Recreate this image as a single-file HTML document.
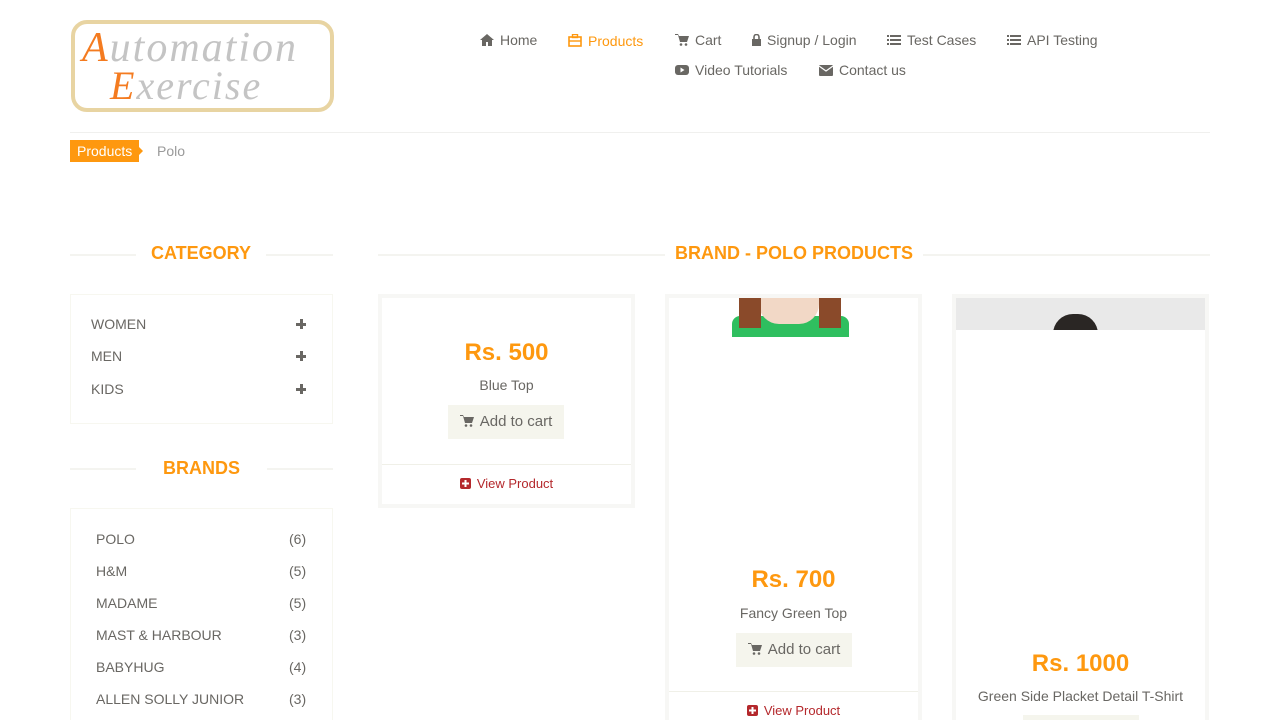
<!DOCTYPE html>
<html style="width:1280px;height:720px;overflow:hidden"><head><style>
*{margin:0;padding:0;box-sizing:border-box}
body{width:1280px;height:720px;overflow:hidden;background:#fff;font-family:"Liberation Sans",sans-serif;color:#696763;position:relative}
.a{position:absolute;white-space:nowrap}
.nav{font-size:14px;color:#696763}
.or{color:#FE980F}
.ttl{font-size:18px;font-weight:bold;color:#FE980F}
.line{position:absolute;height:2px;background:#f4f4f0}
.box{position:absolute;border:1px solid #f7f7f0}
.cat{font-size:14px;color:#696763}
.card{position:absolute;border:4px solid #f7f7f5;background:#fff}
.price{font-size:24px;font-weight:bold;color:#FE980F;text-align:center;width:100%}
.btn{position:absolute;background:#F5F5ED;color:#696763;font-size:15px;height:34px;line-height:34px;width:116px;text-align:center}
.vp{font-size:13px;color:#B4282C;text-align:center;width:100%}
.ic{display:inline-block;vertical-align:-1px;margin-right:6px}
.pl{position:absolute;width:10px;height:10px}
.pl:before{content:"";position:absolute;left:3.5px;top:0;width:3px;height:10px;background:#696763}
.pl:after{content:"";position:absolute;left:0;top:3.5px;width:10px;height:3px;background:#696763}
</style></head><body>
<!-- logo -->
<div class="a" style="left:71px;top:20px;width:263px;height:92px;border:4px solid #e8d4a2;border-radius:16px;background:#fff"></div>
<div class="a" style="left:82px;top:24px;font-family:'Liberation Serif',serif;font-style:italic;font-size:42px;color:#c4c4c4;letter-spacing:2px"><span style="color:#f47b20">A</span>utomation</div>
<div class="a" style="left:110px;top:62px;font-family:'Liberation Serif',serif;font-style:italic;font-size:40px;color:#c4c4c4;letter-spacing:2px"><span style="color:#f47b20">E</span>xercise</div>
<!-- nav -->
<div class="a nav" style="left:480px;top:32px"><svg class="ic" width="14" height="12" viewBox="0 0 14 12"><path d="M7 0L0 6h2v6h4V8h2v4h4V6h2z" fill="#696763"/></svg>Home</div>
<div class="a nav or" style="left:568px;top:33px"><svg class="ic" width="14" height="13" viewBox="0 0 14 13"><rect x="1" y="3" width="12" height="9" fill="none" stroke="#FE980F" stroke-width="1.6"/><rect x="4.5" y="0.5" width="5" height="3" fill="none" stroke="#FE980F" stroke-width="1.4"/><line x1="1" y1="7" x2="13" y2="7" stroke="#FE980F" stroke-width="1.4"/></svg>Products</div>
<div class="a nav" style="left:675px;top:32px"><svg class="ic" width="14" height="12" viewBox="0 0 14 12"><path d="M0 0h3l1 2h10l-2 6H5L3 1H0z" fill="#696763"/><circle cx="6" cy="10.5" r="1.3" fill="#696763"/><circle cx="11" cy="10.5" r="1.3" fill="#696763"/></svg>Cart</div>
<div class="a nav" style="left:752px;top:32px"><svg class="ic" width="9" height="12" viewBox="0 0 9 12"><rect x="0" y="5" width="9" height="7" fill="#696763"/><path d="M2 5V3a2.5 2.5 0 015 0v2" fill="none" stroke="#696763" stroke-width="1.6"/></svg>Signup / Login</div>
<div class="a nav" style="left:887px;top:32px"><svg class="ic" width="14" height="12" viewBox="0 0 14 12"><path d="M0 1h2v2H0zM3 1h11v2H3zM0 5h2v2H0zM3 5h11v2H3zM0 9h2v2H0zM3 9h11v2H3z" fill="#696763"/></svg>Test Cases</div>
<div class="a nav" style="left:1007px;top:32px"><svg class="ic" width="14" height="12" viewBox="0 0 14 12"><path d="M0 1h2v2H0zM3 1h11v2H3zM0 5h2v2H0zM3 5h11v2H3zM0 9h2v2H0zM3 9h11v2H3z" fill="#696763"/></svg>API Testing</div>
<div class="a nav" style="left:675px;top:62px"><svg class="ic" width="14" height="12" viewBox="0 0 14 12"><rect x="0" y="1" width="14" height="10" rx="3" fill="#696763"/><path d="M5.5 3.5v5l4-2.5z" fill="#fff"/></svg>Video Tutorials</div>
<div class="a nav" style="left:819px;top:62px"><svg class="ic" width="14" height="11" viewBox="0 0 14 11"><rect x="0" y="0" width="14" height="11" rx="1" fill="#696763"/><path d="M0 1l7 5 7-5" fill="none" stroke="#fff" stroke-width="1.2"/></svg>Contact us</div>
<div class="line" style="left:70px;top:132px;width:1140px;height:1px;background:#f0f0ee"></div>
<!-- breadcrumb -->
<div class="a" style="left:70px;top:140px;width:69px;height:22px;background:#FE980F;color:#fff;font-size:14px;line-height:22px;padding-left:7px">Products</div>
<div class="a" style="left:139px;top:147px;border-left:4px solid #FE980F;border-top:4px solid transparent;border-bottom:4px solid transparent"></div>
<div class="a" style="left:157px;top:143px;font-size:14px;color:#9a9a9a">Polo</div>
<!-- category -->
<div class="line" style="left:70px;top:254px;width:263px"></div>
<div class="a ttl" style="left:136px;top:243px;background:#fff;padding:0 15px">CATEGORY</div>
<div class="box" style="left:70px;top:294px;width:263px;height:130px"></div>
<div class="a cat" style="left:91px;top:316px">WOMEN</div><div class="pl" style="left:296px;top:319px"></div>
<div class="a cat" style="left:91px;top:348px">MEN</div><div class="pl" style="left:296px;top:351px"></div>
<div class="a cat" style="left:91px;top:381px">KIDS</div><div class="pl" style="left:296px;top:384px"></div>
<!-- brands -->
<div class="line" style="left:70px;top:468px;width:263px"></div>
<div class="a ttl" style="left:136px;top:458px;background:#fff;padding:0 27px">BRANDS</div>
<div class="box" style="left:70px;top:508px;width:263px;height:230px"></div>
<div class="a cat" style="left:96px;top:531px">POLO</div><div class="a cat" style="left:289px;top:531px">(6)</div>
<div class="a cat" style="left:96px;top:563px">H&amp;M</div><div class="a cat" style="left:289px;top:563px">(5)</div>
<div class="a cat" style="left:96px;top:595px">MADAME</div><div class="a cat" style="left:289px;top:595px">(5)</div>
<div class="a cat" style="left:96px;top:627px">MAST &amp; HARBOUR</div><div class="a cat" style="left:289px;top:627px">(3)</div>
<div class="a cat" style="left:96px;top:659px">BABYHUG</div><div class="a cat" style="left:289px;top:659px">(4)</div>
<div class="a cat" style="left:96px;top:691px">ALLEN SOLLY JUNIOR</div><div class="a cat" style="left:289px;top:691px">(3)</div>
<!-- main title -->
<div class="line" style="left:378px;top:254px;width:832px"></div>
<div class="a ttl" style="left:665px;top:243px;background:#fff;padding:0 10px">BRAND - POLO PRODUCTS</div>
<!-- card1 -->
<div class="card" style="left:378px;top:294px;width:257px;height:214px">
 <div class="a price" style="left:0;top:41px">Rs. 500</div>
 <div class="a" style="left:0;top:79px;width:100%;text-align:center;font-size:14px">Blue Top</div>
 <div class="btn" style="left:66px;top:107px"><svg class="ic" width="14" height="12" viewBox="0 0 14 12"><path d="M0 0h3l1 2h10l-2 6H5L3 1H0z" fill="#696763"/><circle cx="6" cy="10.5" r="1.3" fill="#696763"/><circle cx="11" cy="10.5" r="1.3" fill="#696763"/></svg>Add to cart</div>
 <div class="a" style="left:0;top:166px;width:100%;height:1px;background:#f0f0e8"></div>
 <div class="a vp" style="left:0;top:178px"><svg class="ic" width="11" height="11" viewBox="0 0 11 11"><rect width="11" height="11" rx="2" fill="#B4282C"/><path d="M5.5 2v7M2 5.5h7" stroke="#fff" stroke-width="2"/></svg>View Product</div>
</div>
<!-- card2 -->
<div class="card" style="left:665px;top:294px;width:257px;height:440px">
 <div class="a" style="left:63px;top:18px;width:117px;height:21px;background:#2fbf5f;border-radius:8px 8px 0 0"></div>
 <div class="a" style="left:90px;top:0;width:60px;height:26px;background:#f2d8c6;border-radius:0 0 20px 20px"></div>
 <div class="a" style="left:70px;top:0;width:22px;height:30px;background:#8a4a2a"></div>
 <div class="a" style="left:150px;top:0;width:22px;height:30px;background:#8a4a2a"></div>
 <div class="a price" style="left:0;top:268px">Rs. 700</div>
 <div class="a" style="left:0;top:307px;width:100%;text-align:center;font-size:14px">Fancy Green Top</div>
 <div class="btn" style="left:67px;top:335px"><svg class="ic" width="14" height="12" viewBox="0 0 14 12"><path d="M0 0h3l1 2h10l-2 6H5L3 1H0z" fill="#696763"/><circle cx="6" cy="10.5" r="1.3" fill="#696763"/><circle cx="11" cy="10.5" r="1.3" fill="#696763"/></svg>Add to cart</div>
 <div class="a" style="left:0;top:393px;width:100%;height:1px;background:#f0f0e8"></div>
 <div class="a vp" style="left:0;top:405px"><svg class="ic" width="11" height="11" viewBox="0 0 11 11"><rect width="11" height="11" rx="2" fill="#B4282C"/><path d="M5.5 2v7M2 5.5h7" stroke="#fff" stroke-width="2"/></svg>View Product</div>
</div>
<!-- card3 -->
<div class="card" style="left:952px;top:294px;width:257px;height:440px">
 <div class="a" style="left:0;top:0;width:249px;height:32px;background:#e9e9e9"></div>
 <div class="a" style="left:97px;top:16px;width:45px;height:20px;border-radius:22px 22px 0 0;background:#2a2624"></div>
 <div class="a" style="left:0;top:32px;width:249px;height:10px;background:#fff"></div>
 <div class="a price" style="left:0;top:352px">Rs. 1000</div>
 <div class="a" style="left:0;top:390px;width:100%;text-align:center;font-size:14px">Green Side Placket Detail T-Shirt</div>
 <div class="btn" style="left:67px;top:417px"></div>
</div>
</body></html>
